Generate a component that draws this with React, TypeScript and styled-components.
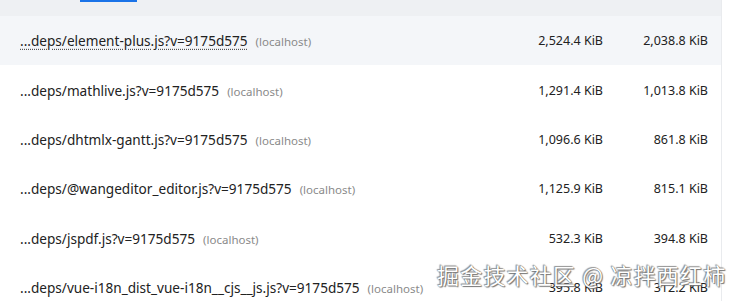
import React from 'react';
import styled, { createGlobalStyle } from 'styled-components';

interface Resource {
  path: string;
  size: string;
  transferred: string;
}

const resources: Resource[] = [
  { path: '...deps/element-plus.js?v=9175d575', size: '2,524.4 KiB', transferred: '2,038.8 KiB' },
  { path: '...deps/mathlive.js?v=9175d575', size: '1,291.4 KiB', transferred: '1,013.8 KiB' },
  { path: '...deps/dhtmlx-gantt.js?v=9175d575', size: '1,096.6 KiB', transferred: '861.8 KiB' },
  { path: '...deps/@wangeditor_editor.js?v=9175d575', size: '1,125.9 KiB', transferred: '815.1 KiB' },
  { path: '...deps/jspdf.js?v=9175d575', size: '532.3 KiB', transferred: '394.8 KiB' },
  { path: '...deps/vue-i18n_dist_vue-i18n__cjs__js.js?v=9175d575', size: '395.8 KiB', transferred: '312.2 KiB' },
];

const GlobalStyle = createGlobalStyle`
  html, body {
    margin: 0;
    padding: 0;
    background: #ffffff;
    overflow: hidden;
  }
  body {
    font-family: "Noto Sans", "Open Sans", sans-serif;
  }
`;

const Page = styled.div`
  position: relative;
  width: 732px;
  height: 301px;
  overflow: hidden;
  background: #ffffff;
`;

const Panel = styled.div`
  width: 722px;
  height: 100%;
  border-right: 1px solid #e9ebee;
  box-sizing: border-box;
`;

const TabStrip = styled.div`
  position: relative;
  height: 16px;
  background: #eef0f3;
`;

const TabIndicator = styled.span`
  position: absolute;
  left: 80px;
  top: 0;
  width: 57px;
  height: 2px;
  background: #1a73e8;
`;

const Row = styled.div<{ $highlight?: boolean }>`
  display: flex;
  align-items: center;
  height: 49.4px;
  padding: 0 13px 0 20px;
  background: ${p => (p.$highlight ? '#f4f6f9' : '#ffffff')};
  font-size: 12.5px;
  color: #222;
`;

const NameCell = styled.div`
  flex: 1;
  min-width: 0;
  white-space: nowrap;
  overflow: hidden;
`;

const Path = styled.span<{ $hover?: boolean }>`
  font-size: 13.6px;
  text-decoration: ${p => (p.$hover ? 'underline dotted #555' : 'none')};
  text-underline-offset: 3px;
`;

const Host = styled.span`
  margin-left: 8px;
  font-size: 11.5px;
  color: #8a8a8a;
`;

const NumberCell = styled.div<{ $width: number }>`
  width: ${p => p.$width}px;
  text-align: right;
  white-space: nowrap;
`;

const Watermark = styled.div`
  position: absolute;
  left: 437px;
  top: 258px;
  font-family: "Noto Sans CJK SC", "Noto Sans", sans-serif;
  font-size: 22px;
  letter-spacing: 1.2px;
  color: #ffffff;
  text-shadow: 0 0 1px #555, 1px 1px 1px #777, -1px -1px 1px #999;
  white-space: nowrap;
  pointer-events: none;
`;

export default function App() {
  return (
    <Page>
      <GlobalStyle />
      <Panel>
        <TabStrip>
          <TabIndicator />
        </TabStrip>
        {resources.map((r, i) => (
          <Row key={r.path} $highlight={i === 0}>
            <NameCell>
              <Path $hover={i === 0}>{r.path}</Path>
              <Host>(localhost)</Host>
            </NameCell>
            <NumberCell $width={110}>{r.size}</NumberCell>
            <NumberCell $width={105}>{r.transferred}</NumberCell>
          </Row>
        ))}
      </Panel>
      <Watermark>掘金技术社区 @ 凉拌西红柿</Watermark>
    </Page>
  );
}
